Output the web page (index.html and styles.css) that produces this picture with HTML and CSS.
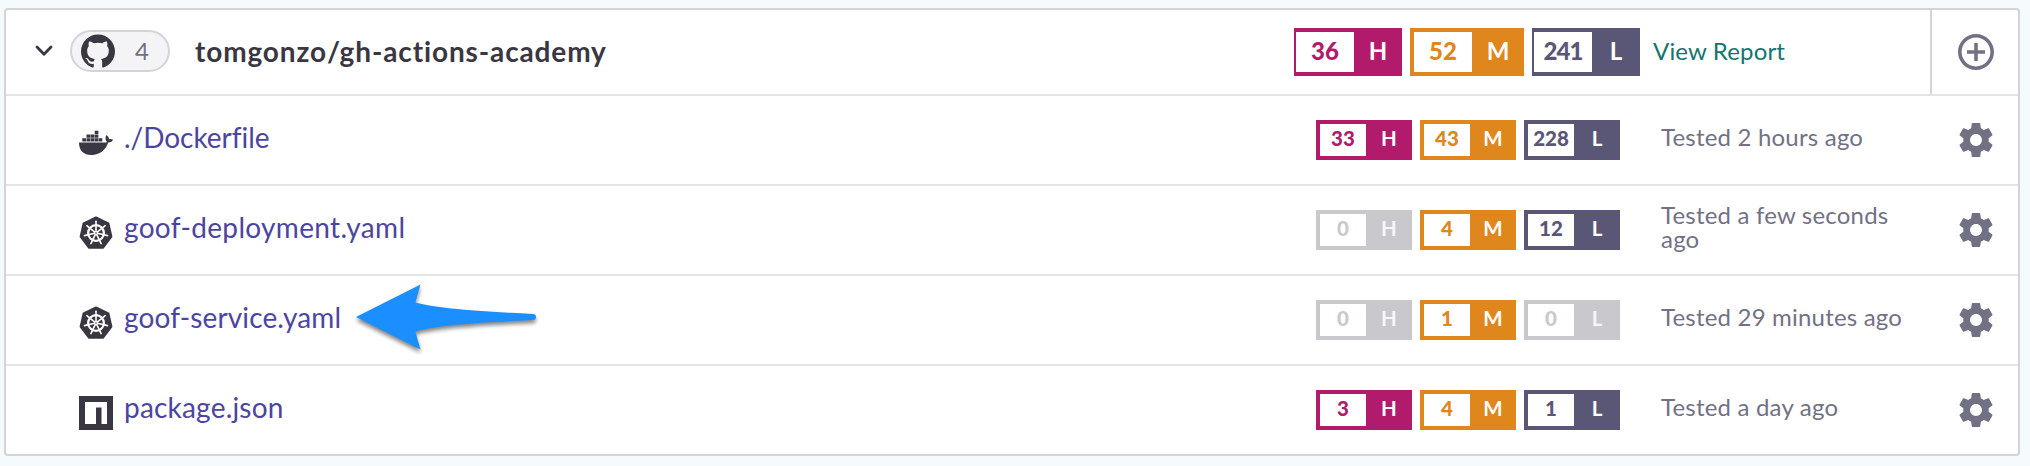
FILE: index.html
```
<!DOCTYPE html>
<html lang="en">
<head>
<meta charset="utf-8">
<title>Projects</title>
<link rel="stylesheet" href="styles.css">
</head>
<body>
<svg class="defs" aria-hidden="true">
  <symbol id="gear" viewBox="2 2 20 20"><path d="M19.43 12.98c.04-.32.07-.64.07-.98s-.03-.66-.07-.98l2.11-1.65c.19-.15.24-.42.12-.64l-2-3.46c-.12-.22-.39-.3-.61-.22l-2.49 1c-.52-.4-1.08-.73-1.69-.98l-.38-2.65C14.46 2.18 14.25 2 14 2h-4c-.25 0-.46.18-.49.42l-.38 2.65c-.61.25-1.17.59-1.69.98l-2.49-1c-.23-.09-.49 0-.61.22l-2 3.46c-.13.22-.07.49.12.64l2.11 1.65c-.04.32-.07.65-.07.98s.03.66.07.98l-2.11 1.65c-.19.15-.24.42-.12.64l2 3.46c.12.22.39.3.61.22l2.49-1c.52.4 1.08.73 1.69.98l.38 2.65c.03.24.24.42.49.42h4c.25 0 .46-.18.49-.42l.38-2.65c.61-.25 1.17-.59 1.69-.98l2.49 1c.23.09.49 0 .61-.22l2-3.46c.12-.22.07-.49-.12-.64l-2.11-1.65zM12 15.5c-1.93 0-3.5-1.57-3.5-3.5s1.57-3.5 3.5-3.5 3.5 1.57 3.5 3.5-1.57 3.5-3.5 3.5z"/></symbol>
  <symbol id="kube" viewBox="-17 -17 34 34">
    <path fill="#3a3742" stroke="#3a3742" stroke-width="2" stroke-linejoin="round" d="M0-15.5 12.4-9.7 15.4 3.6 6.9 14.8H-6.9L-15.4 3.6-12.4-9.7z"/>
    <g fill="none" stroke="#fff">
      <circle r="7.9" stroke-width="2.2"/>
      <circle r="2.1" fill="#fff" stroke="none"/>
      <g id="spoke" stroke-width="1.6" stroke-linecap="round"><path d="M0-1.5V-11.8"/></g>
      <use href="#spoke" transform="rotate(51.43)"/><use href="#spoke" transform="rotate(102.86)"/><use href="#spoke" transform="rotate(154.29)"/><use href="#spoke" transform="rotate(205.71)"/><use href="#spoke" transform="rotate(257.14)"/><use href="#spoke" transform="rotate(308.57)"/>
    </g>
    <circle r=".8" fill="#3a3742"/>
  </symbol>
</svg>
<main class="panel">
  <header class="row head">
    <svg class="chevron" viewBox="0 0 18 12"><path d="M2 2l7 7.2L16 2"/></svg>
    <span class="pill">
      <svg class="github" viewBox="0 0 24 24"><path d="M12 .297c-6.63 0-12 5.373-12 12 0 5.303 3.438 9.8 8.205 11.385.6.113.82-.258.82-.577 0-.285-.01-1.04-.015-2.04-3.338.724-4.042-1.61-4.042-1.61C4.422 18.07 3.633 17.7 3.633 17.7c-1.087-.744.084-.729.084-.729 1.205.084 1.838 1.236 1.838 1.236 1.07 1.835 2.809 1.305 3.495.998.108-.776.417-1.305.76-1.605-2.665-.3-5.466-1.332-5.466-5.93 0-1.31.465-2.38 1.235-3.22-.135-.303-.54-1.523.105-3.176 0 0 1.005-.322 3.3 1.23.96-.267 1.98-.399 3-.405 1.02.006 2.04.138 3 .405 2.28-1.552 3.285-1.23 3.285-1.23.645 1.653.24 2.873.12 3.176.765.84 1.23 1.91 1.23 3.22 0 4.61-2.805 5.625-5.475 5.92.42.36.81 1.096.81 2.22 0 1.606-.015 2.896-.015 3.286 0 .315.21.69.825.57C20.565 22.092 24 17.592 24 12.297c0-6.627-5.373-12-12-12"/></svg>
      <span class="count">4</span>
    </span>
    <h1 class="title">tomgonzo/gh-actions-academy</h1>
    <div class="badges">
      <span class="badge high"><b>36</b><i>H</i></span>
      <span class="badge medium"><b>52</b><i>M</i></span>
      <span class="badge low"><b class="wide">241</b><i>L</i></span>
    </div>
    <a class="report">View Report</a>
    <div class="add"><svg viewBox="2 2 20 20"><path d="M13 7h-2v4H7v2h4v4h2v-4h4v-2h-4V7zm-1-5C6.48 2 2 6.48 2 12s4.480 10 10 10 10-4.480 10-10S17.520 2 12 2zm0 18c-4.410 0-8-3.590-8-8s3.590-8 8-8 8 3.590 8 8-3.590 8-8 8z"/></svg></div>
  </header>

  <div class="row file">
    <svg class="icon" viewBox="0 0 34 34"><g fill="#3a3742"><path d="M0 16.500h25.200c1.200 0 2.100-.2 2.900-.6-1.900-1.900-2.100-4.700-.6-6.900 1.600 1.200 2.500 2.600 2.600 4.300 1.400-.4 2.700-.2 4 .6-.9 1.800-2.500 2.700-4.900 2.700C26.700 24.400 20.600 29 12.500 29 4.300 29 0 24.300 0 16.500z"/><path d="M3.300 12.300h3.700v3.300H3.300zM7.500 12.300h3.700v3.300H7.500zM11.600 12.300h3.700v3.300h-3.700zM15.700 12.300h3.700v3.300h-3.700zM19.800 12.300h3.500v3.300h-3.500zM7.500 8.500h3.700v3.300H7.500zM11.600 8.500h3.700v3.300h-3.700zM15.700 8.500h3.700v3.300h-3.700zM15.700 4.800h3.700v3.200h-3.700z"/></g></svg>
    <a class="name n1">./Dockerfile</a>
    <div class="badges">
      <span class="badge high"><b>33</b><i>H</i></span>
      <span class="badge medium"><b>43</b><i>M</i></span>
      <span class="badge low"><b>228</b><i>L</i></span>
    </div>
    <span class="tested">Tested 2 hours ago</span>
    <svg class="gear"><use href="#gear"/></svg>
  </div>

  <div class="row file">
    <svg class="icon"><use href="#kube"/></svg>
    <a class="name n2">goof-deployment.yaml</a>
    <div class="badges">
      <span class="badge none"><b>0</b><i>H</i></span>
      <span class="badge medium"><b>4</b><i>M</i></span>
      <span class="badge low"><b>12</b><i>L</i></span>
    </div>
    <span class="tested">Tested a few seconds ago</span>
    <svg class="gear"><use href="#gear"/></svg>
  </div>

  <div class="row file">
    <svg class="icon"><use href="#kube"/></svg>
    <a class="name n3">goof-service.yaml</a>
    <svg class="arrow" viewBox="0 0 190 80"><path d="M6 37 70.500 4.500 65.300 22.600C90 29 130 31.500 183 34a3 3 0 0 1 0 6C130 42.500 85 45 65.300 51.700L70.500 69.500z"/></svg>
    <div class="badges">
      <span class="badge none"><b>0</b><i>H</i></span>
      <span class="badge medium"><b>1</b><i>M</i></span>
      <span class="badge none"><b>0</b><i>L</i></span>
    </div>
    <span class="tested">Tested 29 minutes ago</span>
    <svg class="gear"><use href="#gear"/></svg>
  </div>

  <div class="row file">
    <svg class="icon" viewBox="0 0 34 34"><path fill="#3a3742" fill-rule="evenodd" d="M0 0h34v34H0zM6 6v22h11V11.500h5.500V28H28V6z"/></svg>
    <a class="name n4">package.json</a>
    <div class="badges">
      <span class="badge high"><b>3</b><i>H</i></span>
      <span class="badge medium"><b>4</b><i>M</i></span>
      <span class="badge low"><b>1</b><i>L</i></span>
    </div>
    <span class="tested">Tested a day ago</span>
    <svg class="gear"><use href="#gear"/></svg>
  </div>
</main>
</body>
</html>
```
FILE: styles.css
```
* { box-sizing: border-box; }

body {
  margin: 0;
  padding: 8px 10px 10px 4px;
  height: 466px;
  overflow: hidden;
  background: #f5fafd;
  font-family: Lato, "Liberation Sans", sans-serif;
  color: #727184;
}

.defs { display: block; width: 0; height: 0; }

.panel {
  height: 448px;
  border: 2px solid #d3d3d9;
  border-radius: 4px;
  background: #fff;
}

.row {
  position: relative;
  display: flex;
  align-items: center;
  height: 90px;
  border-bottom: 2px solid #e4e3e8;
}
.row:last-child { border-bottom: 0; height: 88px; }
.head { height: 86px; padding-left: 29px; }
.file { padding-left: 73px; }

.chevron {
  flex: none;
  width: 18px;
  height: 12px;
  margin-top: -3px;
  fill: none;
  stroke: #3a3742;
  stroke-width: 2.8;
  stroke-linecap: round;
  stroke-linejoin: round;
}

.pill {
  flex: none;
  display: flex;
  align-items: center;
  width: 100px;
  height: 42px;
  margin: -2px 0 0 17px;
  padding-left: 9px;
  border: 2px solid #d3d3d9;
  border-radius: 21px;
  background: #f4f4f6;
}
.github { width: 34px; height: 34px; fill: #3a3742; }
.count { margin: 0 0 0 20px; font-size: 24px; line-height: 28px; }

.title {
  margin: -3px 0 0 25px;
  font-size: 28px;
  font-weight: 700;
  line-height: 36px;
  letter-spacing: .87px;
  color: #3a3742;
}

.badges { display: flex; gap: 8px; margin-left: auto; }
.badge {
  display: flex;
  width: 96px;
  height: 40px;
  padding: 4px 0 4px 4px;
  font-size: 20.5px;
  font-weight: 700;
  line-height: 29px;
  text-align: center;
}
.badge b { width: 46px; background: #fff; color: inherit; }
.badge i { flex: 1; font-style: normal; color: #fff; }
.high { background: #b21a6b; color: #b21a6b; }
.medium { background: #df861d; color: #df861d; }
.low { background: #5a5675; color: #5a5675; }
.none { background: #c9c8cd; color: #c9c8cd; }
.none i { color: #f6f6f7; }

.head .badge {
  width: 108px;
  height: 48px;
  padding: 4px 0 4px 2px;
  font-size: 24px;
  line-height: 38px;
}
.head .badge b { width: 58px; }
.head .badge .wide { letter-spacing: -1px; }
.head .medium { width: 114px; padding-left: 4px; }

.report {
  width: 277px;
  margin: -2px 0 0 13px;
  font-size: 24px;
  line-height: 28px;
  letter-spacing: .15px;
  color: #14746f;
}
.add {
  display: flex;
  align-items: center;
  justify-content: center;
  width: 88px;
  height: 84px;
  padding-left: 2px;
  border-left: 2px solid #d3d3d9;
}
.add svg { width: 36px; height: 36px; fill: #727184; }

.icon { flex: none; width: 34px; height: 34px; margin-top: 5px; }
.name {
  margin: -6px 0 0 11px;
  font-size: 28px;
  line-height: 36px;
  color: #4b45a1;
}
.n1 { letter-spacing: -.03px; }
.n2 { letter-spacing: .33px; }
.n3 { letter-spacing: .13px; }
.n4 { letter-spacing: .2px; }

.tested {
  width: 250px;
  margin: -6px 0 0 41px;
  font-size: 24px;
  line-height: 24px;
  letter-spacing: .2px;
}
.gear { width: 34px; height: 34px; margin: 0 25px 0 48px; fill: #727184; }

/* Callout lying over the row */
.arrow {
  position: absolute;
  left: 344px;
  top: 4px;
  width: 190px;
  height: 80px;
  fill: #1b8fff;
  filter: drop-shadow(0 3px 2px rgba(0, 0, 0, .5));
}
```
